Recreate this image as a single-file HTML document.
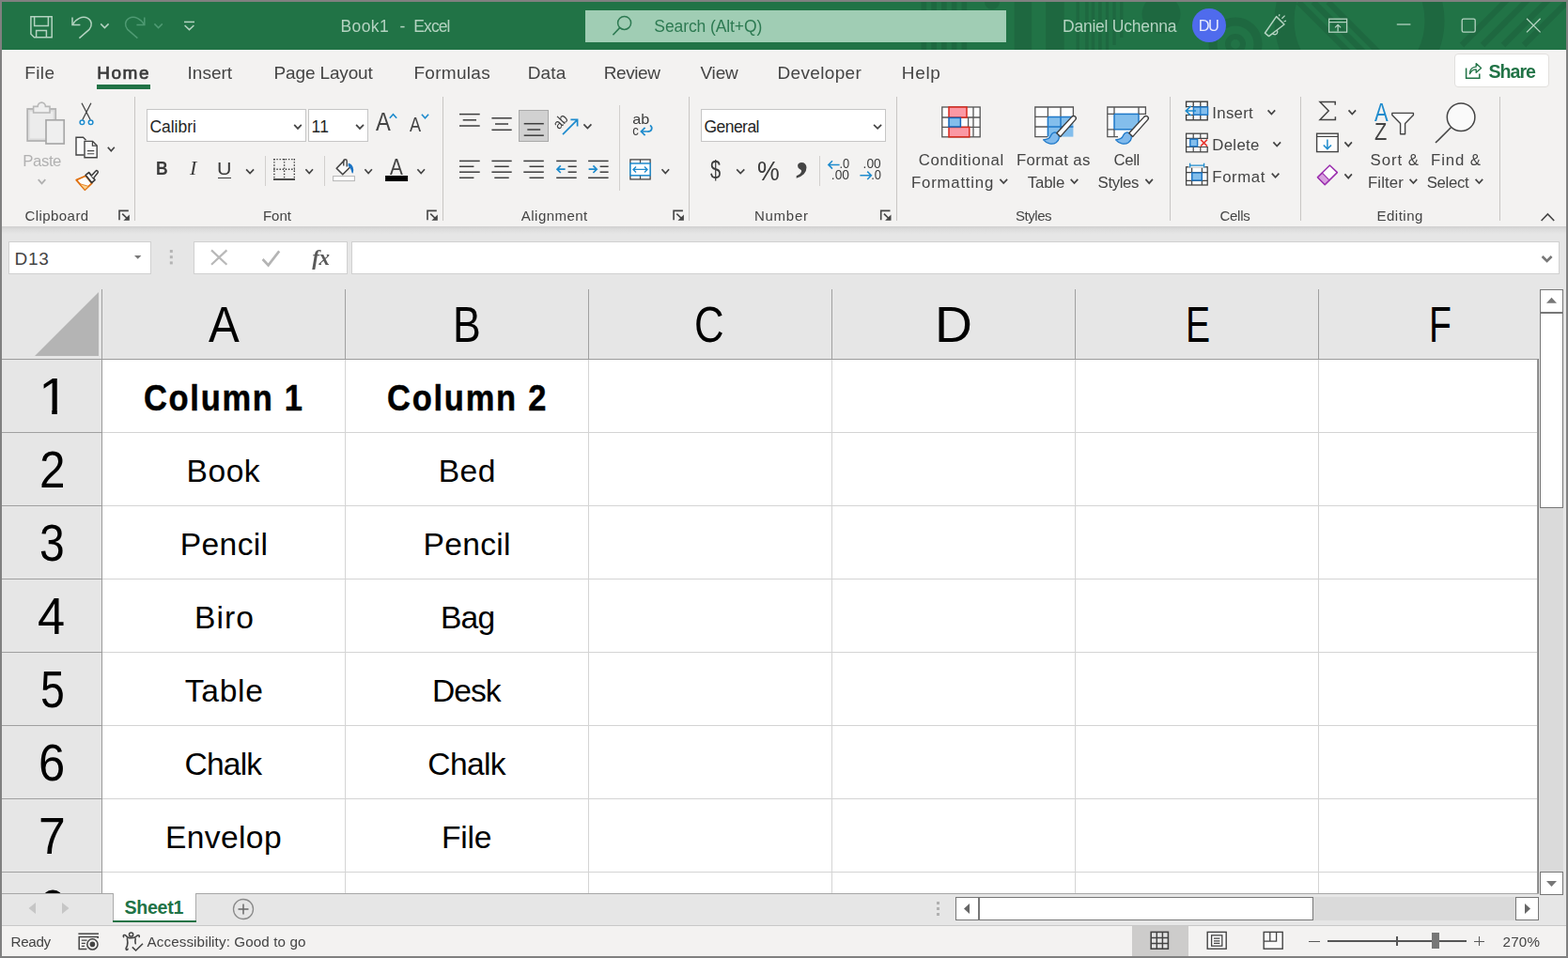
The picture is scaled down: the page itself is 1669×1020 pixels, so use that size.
<!DOCTYPE html>
<html lang="en"><head><meta charset="utf-8"><title>Book1 - Excel</title>
<style>
html,body{margin:0;padding:0;}
body{width:1669px;height:1020px;overflow:hidden;position:relative;background:#fff;font-family:"Liberation Sans",sans-serif;}
.b{position:absolute;box-sizing:border-box;display:block;}
.t{position:absolute;white-space:pre;line-height:1;font-family:"Liberation Sans",sans-serif;}
.gl{position:absolute;left:0;width:1669px;will-change:transform;pointer-events:none;}
svg{overflow:visible;}
</style></head>
<body>
<div id="window-frame" aria-label="Excel window">
<div class="b" style="left:0px;top:0px;width:1669px;height:1020px;background:#808080;"></div>
</div>
<header id="title-bar" aria-label="Title bar">
<div class="b" style="left:2px;top:2px;width:1665px;height:51px;background:#217346;"></div>
<svg class="b" style="left:2px;top:2px;overflow:hidden" width="1665" height="51" viewBox="2 2 1665 51"><g fill="#1e6840"><rect x="980.5" y="2" width="5.6" height="51"/><rect x="991.3" y="2" width="5.6" height="51"/><rect x="1002" y="2" width="5.6" height="51"/><rect x="1012.8" y="2" width="5.6" height="51"/><rect x="1023.6" y="2" width="5.6" height="51"/><circle cx="1056" cy="2" r="8"/><rect x="1079.7" y="2" width="18.4" height="51"/><rect x="1113.2" y="2" width="19.4" height="51"/><rect x="1145.5" y="2" width="3.4" height="51"/><rect x="1155.2" y="2" width="3.4" height="51"/><rect x="1161.7" y="2" width="3.4" height="51"/><rect x="1169.2" y="2" width="3.4" height="51"/><rect x="1176.8" y="2" width="3.4" height="51"/><rect x="1184.3" y="2" width="3.4" height="46"/><rect x="1192" y="2" width="3.4" height="38"/><circle cx="1236" cy="15" r="20.5"/></g><g fill="none" stroke="#1e6840"><circle cx="1315" cy="47" r="24" stroke-width="9"/><circle cx="1315" cy="47" r="8" stroke-width="6"/><circle cx="1447" cy="22" r="80" stroke-width="21"/></g><g stroke="#1e6840" stroke-width="6.2"><path d="M1382.0 2L1439.0 59"/><path d="M1397.8 2L1454.8 59"/><path d="M1413.6 2L1470.6 59"/><path d="M1556 48L1606 -2"/><path d="M1578 48L1628 -2"/><path d="M1600 48L1650 -2"/><path d="M1622 48L1672 -2"/></g></svg>
</header>
<div id="ribbon-background" aria-label="Ribbon background">
<div class="b" style="left:2px;top:53px;width:1665px;height:188px;background:#f3f2f1;"></div>
<div class="b" style="left:2px;top:241px;width:1665px;height:67px;background:#e6e6e6;"></div>
<div class="b" style="left:2px;top:241px;width:1665px;height:8px;background:linear-gradient(#cfcfcf,#dcdcdc 40%,#e6e6e6);"></div>
</div>
<div id="title-bar-content" aria-label="Title bar content">
<div class="b" style="left:623px;top:10.5px;width:448px;height:34px;background:#a0cdb4;"></div>
<div class="b" style="left:1269px;top:9px;width:36px;height:36px;background:#4f6bed;border-radius:50%;"></div>
<div class="gl" style="top:2px;height:51px">
<span class="t" style="left:362.50px;top:18.00px;font-size:17.5px;color:#b4d3c1;letter-spacing:0.403px;">Book1</span>
<span class="t" style="left:425.50px;top:18.00px;font-size:17.5px;color:#b4d3c1;">-</span>
<span class="t" style="left:440.30px;top:18.00px;font-size:17.5px;color:#b4d3c1;letter-spacing:-0.901px;">Excel</span>
<span class="t" style="left:696.30px;top:18.00px;font-size:17.5px;color:#2d7a52;letter-spacing:-0.092px;">Search (Alt+Q)</span>
<span class="t" style="left:1131.00px;top:18.00px;font-size:17.5px;color:#b4d3c1;letter-spacing:-0.238px;">Daniel Uchenna</span>
<span class="t" style="left:1275.80px;top:17.00px;font-size:16.4px;color:#e6eafc;letter-spacing:-1.637px;">DU</span>
</div>
</div>
<nav id="ribbon-tabs" aria-label="Ribbon tabs">
<div class="b" style="left:103px;top:90px;width:57px;height:5px;background:#217346;"></div>
<div class="b" style="left:1548px;top:57px;width:101px;height:36px;background:#ffffff;border:1px solid #e1dfdd;border-radius:4px;"></div>
<div class="gl" style="top:53px;height:47px">
<span class="t" style="left:26.20px;top:15.00px;font-size:19px;color:#444444;letter-spacing:0.384px;">File</span>
<span class="t" style="left:103.20px;top:15.00px;font-size:19px;color:#3b3b3b;letter-spacing:1.562px;-webkit-text-stroke:0.7px #3b3b3b;">Home</span>
<span class="t" style="left:199.60px;top:15.00px;font-size:19px;color:#444444;letter-spacing:-0.008px;">Insert</span>
<span class="t" style="left:291.60px;top:15.00px;font-size:19px;color:#444444;letter-spacing:-0.152px;">Page Layout</span>
<span class="t" style="left:440.40px;top:15.00px;font-size:19px;color:#444444;letter-spacing:0.303px;">Formulas</span>
<span class="t" style="left:561.70px;top:15.00px;font-size:19px;color:#444444;letter-spacing:0.144px;">Data</span>
<span class="t" style="left:642.70px;top:15.00px;font-size:19px;color:#444444;letter-spacing:-0.395px;">Review</span>
<span class="t" style="left:745.40px;top:15.00px;font-size:19px;color:#444444;letter-spacing:-0.139px;">View</span>
<span class="t" style="left:827.50px;top:15.00px;font-size:19px;color:#444444;letter-spacing:0.340px;">Developer</span>
<span class="t" style="left:959.80px;top:15.00px;font-size:19px;color:#444444;letter-spacing:0.664px;">Help</span>
<span class="t" style="left:1584.60px;top:14.00px;font-size:19.6px;color:#217346;letter-spacing:-1.040px;font-weight:700;">Share</span>
</div>
</nav>
<div id="title-bar-icons" aria-label="Quick access toolbar and window controls">
<svg class="b" style="left:0px;top:0px;" width="1669" height="100" viewBox="0 0 1669 100"><path d="M32.9 17.7H55.2V39.7H36.4L32.9 36.2Z" fill="none" stroke="#b4d3c1" stroke-width="1.5" stroke-linejoin="miter"/><path d="M36.6 17.7V27.4H51.4V17.7" fill="none" stroke="#b4d3c1" stroke-width="1.5"/><path d="M38.6 39.7V32.6H49.4V39.7" fill="none" stroke="#b4d3c1" stroke-width="1.5"/><path d="M77 18.4V26.6H85.4" fill="none" stroke="#b4d3c1" stroke-width="1.5"/><path d="M77.4 26.2C81 20 87.6 16.4 93.4 19.4C98 22 98.4 27.6 95 31.4L84.4 40.6" fill="none" stroke="#b4d3c1" stroke-width="1.5"/><polyline points="107.2,25.4 111.4,29.6 115.6,25.4" fill="none" stroke="#b4d3c1" stroke-width="1.5"/><path d="M153.8 18.4V26.6H145.4" fill="none" stroke="#4f9a73" stroke-width="1.5"/><path d="M153.4 26.2C149.8 20 143.2 16.4 137.4 19.4C132.8 22 132.4 27.6 135.8 31.4L146.4 40.6" fill="none" stroke="#4f9a73" stroke-width="1.5"/><polyline points="164.4,25.4 168.6,29.6 172.8,25.4" fill="none" stroke="#4f9a73" stroke-width="1.5"/><path d="M196 23.4H207" stroke="#b4d3c1" stroke-width="1.5"/><polyline points="196.6,27 201.5,31.6 206.4,27" fill="none" stroke="#b4d3c1" stroke-width="1.5"/><circle cx="664.6" cy="24.4" r="7" fill="none" stroke="#2d7a52" stroke-width="1.5"/><path d="M659.6 29.6L652.4 37.2" stroke="#2d7a52" stroke-width="1.6"/><path d="M1346.4 35.2L1358.6 17.6L1367 26L1350.6 38.6Z" fill="none" stroke="#b4d3c1" stroke-width="1.5" stroke-linejoin="round"/><path d="M1354.6 35.6a2.6 2.6 0 0 0 4.6 -3.4" fill="none" stroke="#b4d3c1" stroke-width="1.3"/><path d="M1361.4 17.2L1362 15.2M1364.4 19.8L1367.6 16.6M1366.6 22.8L1369 22.2" stroke="#b4d3c1" stroke-width="1.3"/><rect x="1414.6" y="20.2" width="19" height="14" fill="none" stroke="#b4d3c1" stroke-width="1.3"/><path d="M1414.6 23.6H1433.6" stroke="#b4d3c1" stroke-width="1.2"/><path d="M1424.1 33.4V26.6M1421 29.4L1424.1 26.4L1427.2 29.4" fill="none" stroke="#b4d3c1" stroke-width="1.3"/><path d="M1486.8 26H1501.4" stroke="#b4d3c1" stroke-width="1.3"/><rect x="1556.2" y="20.2" width="14" height="14" rx="1.6" fill="none" stroke="#b4d3c1" stroke-width="1.3"/><path d="M1625 19.8L1639.6 34.4M1639.6 19.8L1625 34.4" stroke="#b4d3c1" stroke-width="1.3"/><path d="M1560.6 72.6V83.2H1574.8V78.4" fill="none" stroke="#217346" stroke-width="1.5"/><path d="M1564.4 78.6C1564.6 74.2 1567.4 71.4 1571.2 71.2V67.6L1576.6 72.4L1571.2 77.2V73.8C1568.2 73.8 1566 75.4 1564.4 78.6Z" fill="none" stroke="#217346" stroke-width="1.3" stroke-linejoin="round"/></svg>
</div>
<section id="ribbon" aria-label="Home ribbon">
<div class="b" style="left:143.0px;top:103px;width:1px;height:132px;background:#c8c6c4;"></div>
<div class="b" style="left:156px;top:116px;width:170px;height:35px;background:#fff;border:1px solid #c6c6c6;"></div>
<div class="b" style="left:328px;top:116px;width:64px;height:35px;background:#fff;border:1px solid #c6c6c6;"></div>
<div class="b" style="left:232.4px;top:189px;width:13.8px;height:1.3px;background:#3b3b3b;"></div>
<div class="b" style="left:282.1px;top:166px;width:1px;height:32px;background:#d2d0ce;"></div>
<div class="b" style="left:345.0px;top:166px;width:1px;height:32px;background:#d2d0ce;"></div>
<div class="b" style="left:470.8px;top:103px;width:1px;height:132px;background:#c8c6c4;"></div>
<div class="b" style="left:552px;top:117px;width:32px;height:34px;background:#d1d1d1;border:1px solid #a9a9a9;"></div>
<div class="b" style="left:658.8px;top:112px;width:1px;height:91px;background:#d2d0ce;"></div>
<div class="b" style="left:733.0px;top:103px;width:1px;height:132px;background:#c8c6c4;"></div>
<div class="b" style="left:746px;top:116px;width:197px;height:35px;background:#fff;border:1px solid #c6c6c6;"></div>
<div class="b" style="left:871.8px;top:166px;width:1px;height:32px;background:#d2d0ce;"></div>
<div class="b" style="left:954.1px;top:103px;width:1px;height:132px;background:#c8c6c4;"></div>
<div class="b" style="left:1245.0px;top:103px;width:1px;height:132px;background:#c8c6c4;"></div>
<div class="b" style="left:1383.9px;top:103px;width:1px;height:132px;background:#c8c6c4;"></div>
<div class="b" style="left:1596.0px;top:103px;width:1px;height:132px;background:#c8c6c4;"></div>
<span class="t" style="left:159.40px;top:127.00px;font-size:17.5px;color:#262626;letter-spacing:-0.018px;">Calibri</span>
<span class="t" style="left:331.60px;top:127.00px;font-size:17.5px;color:#262626;letter-spacing:0.166px;">11</span>
<span class="t" style="left:749.40px;top:127.00px;font-size:17.5px;color:#262626;letter-spacing:-0.528px;">General</span>
<div class="gl" style="top:100px;height:141px">
<span class="t" style="left:24.30px;top:64.00px;font-size:16.8px;color:#b1b1b1;letter-spacing:-0.445px;">Paste</span>
<span class="t" style="left:26.60px;top:122.00px;font-size:15.0px;color:#444444;letter-spacing:0.417px;">Clipboard</span>
<span class="t" style="left:165.94px;top:69.00px;font-size:20.4px;color:#3b3b3b;transform:scaleX(0.8615);transform-origin:0 0;font-weight:700;">B</span>
<span class="t" style="left:202.38px;top:69.00px;font-size:20.5px;color:#3b3b3b;transform:scaleX(1.0778);transform-origin:0 0;font-style:italic;font-family:'Liberation Serif', serif;">I</span>
<span class="t" style="left:231.26px;top:71.00px;font-size:18.8px;color:#3b3b3b;transform:scaleX(1.1417);transform-origin:0 0;">U</span>
<span class="t" style="left:279.90px;top:122.00px;font-size:15.0px;color:#444444;letter-spacing:0.018px;">Font</span>
<span class="t" style="left:554.80px;top:122.00px;font-size:15.0px;color:#444444;letter-spacing:0.471px;">Alignment</span>
<span class="t" style="left:755.60px;top:67.00px;font-size:27.5px;color:#3b3b3b;transform:scaleX(0.7333);transform-origin:0 0;">$</span>
<span class="t" style="left:805.81px;top:67.00px;font-size:30px;color:#3b3b3b;transform:scaleX(0.8920);transform-origin:0 0;">%</span>
<span class="t" style="left:802.90px;top:122.00px;font-size:15.0px;color:#444444;letter-spacing:0.769px;">Number</span>
<span class="t" style="left:977.70px;top:63.00px;font-size:16.8px;color:#444444;letter-spacing:0.646px;">Conditional</span>
<span class="t" style="left:970.00px;top:87.00px;font-size:16.8px;color:#444444;letter-spacing:0.781px;">Formatting</span>
<span class="t" style="left:1082.00px;top:63.00px;font-size:16.8px;color:#444444;letter-spacing:0.357px;">Format as</span>
<span class="t" style="left:1093.80px;top:87.00px;font-size:16.8px;color:#444444;letter-spacing:-0.171px;">Table</span>
<span class="t" style="left:1185.40px;top:63.00px;font-size:16.8px;color:#444444;letter-spacing:-0.327px;">Cell</span>
<span class="t" style="left:1168.60px;top:87.00px;font-size:16.8px;color:#444444;letter-spacing:-0.361px;">Styles</span>
<span class="t" style="left:1080.90px;top:122.00px;font-size:15.0px;color:#444444;letter-spacing:-0.429px;">Styles</span>
<span class="t" style="left:1290.30px;top:13.00px;font-size:16.8px;color:#444444;letter-spacing:0.299px;">Insert</span>
<span class="t" style="left:1290.30px;top:47.00px;font-size:16.8px;color:#444444;letter-spacing:0.305px;">Delete</span>
<span class="t" style="left:1290.30px;top:81.00px;font-size:16.8px;color:#444444;letter-spacing:0.583px;">Format</span>
<span class="t" style="left:1298.50px;top:122.00px;font-size:15.0px;color:#444444;letter-spacing:-0.285px;">Cells</span>
<span class="t" style="left:1458.60px;top:63.00px;font-size:16.8px;color:#444444;letter-spacing:0.952px;">Sort &amp;</span>
<span class="t" style="left:1456.00px;top:87.00px;font-size:16.8px;color:#444444;letter-spacing:0.100px;">Filter</span>
<span class="t" style="left:1523.10px;top:63.00px;font-size:16.8px;color:#444444;letter-spacing:0.859px;">Find &amp;</span>
<span class="t" style="left:1518.70px;top:87.00px;font-size:16.8px;color:#444444;letter-spacing:-0.336px;">Select</span>
<span class="t" style="left:1465.50px;top:122.00px;font-size:15.0px;color:#444444;letter-spacing:0.496px;">Editing</span>
<span class="t" style="left:399.50px;top:16.00px;font-size:27.6px;color:#444444;transform:scaleX(0.8579);transform-origin:0 0;">A</span>
<span class="t" style="left:436.10px;top:22.00px;font-size:21.2px;color:#444444;transform:scaleX(0.8533);transform-origin:0 0;">A</span>
<span class="t" style="left:415.40px;top:66.00px;font-size:24px;color:#444444;transform:scaleX(0.8625);transform-origin:0 0;">A</span>
<span class="t" style="left:847.00px;top:35.00px;font-size:55px;color:#444444;transform:scaleX(0.9833);transform-origin:0 0;font-weight:700;font-family:'Liberation Serif', serif;">,</span>
<span class="t" style="left:1463.20px;top:7.00px;font-size:27px;color:#1e8bcd;transform:scaleX(0.8111);transform-origin:0 0;">A</span>
<span class="t" style="left:1463.40px;top:27.00px;font-size:26px;color:#444444;transform:scaleX(0.8375);transform-origin:0 0;">Z</span>
</div>
</section>
<div id="ribbon-icons" aria-label="Ribbon icons">
<svg class="b" style="left:0px;top:0px;" width="1669" height="250" viewBox="0 0 1669 250"><polyline points="40.7,191.2 44.5,195.4 48.3,191.2" fill="none" stroke="#b0b0b0" stroke-width="1.8"/><polyline points="114.8,156.7 118.3,160.7 121.8,156.7" fill="none" stroke="#444" stroke-width="1.7"/><g transform="translate(126.2,223.6)"><path d="M0.8 10.6V0.8H10.6" fill="none" stroke="#444" stroke-width="1.6"/><path d="M4 4L9.6 9.4" fill="none" stroke="#444" stroke-width="1.6"/><path d="M11.6 4.8V11.2H5.2Z" fill="#444"/></g><polyline points="313.2,132.8 317.0,136.9 320.8,132.8" fill="none" stroke="#444" stroke-width="1.7"/><polyline points="379.1,132.8 383.0,136.9 387.0,132.8" fill="none" stroke="#444" stroke-width="1.7"/><polyline points="262.1,180.3 266.1,184.5 270.1,180.3" fill="none" stroke="#444" stroke-width="1.7"/><polyline points="325.4,180.3 329.2,184.5 333.0,180.3" fill="none" stroke="#444" stroke-width="1.7"/><polyline points="388.4,180.3 392.1,184.5 395.9,180.3" fill="none" stroke="#444" stroke-width="1.7"/><polyline points="444.4,180.3 448.2,184.5 452.0,180.3" fill="none" stroke="#444" stroke-width="1.7"/><g transform="translate(454.2,223.6)"><path d="M0.8 10.6V0.8H10.6" fill="none" stroke="#444" stroke-width="1.6"/><path d="M4 4L9.6 9.4" fill="none" stroke="#444" stroke-width="1.6"/><path d="M11.6 4.8V11.2H5.2Z" fill="#444"/></g><polyline points="621.4,132.4 625.4,136.5 629.4,132.4" fill="none" stroke="#444" stroke-width="1.7"/><polyline points="704.5,180.3 708.3,184.5 712.1,180.3" fill="none" stroke="#444" stroke-width="1.7"/><g transform="translate(716.3,223.6)"><path d="M0.8 10.6V0.8H10.6" fill="none" stroke="#444" stroke-width="1.6"/><path d="M4 4L9.6 9.4" fill="none" stroke="#444" stroke-width="1.6"/><path d="M11.6 4.8V11.2H5.2Z" fill="#444"/></g><polyline points="930.1,132.8 934.1,136.9 938.1,132.8" fill="none" stroke="#444" stroke-width="1.7"/><polyline points="784.2,180.3 788.2,184.5 792.3,180.3" fill="none" stroke="#444" stroke-width="1.7"/><g transform="translate(936.9,223.6)"><path d="M0.8 10.6V0.8H10.6" fill="none" stroke="#444" stroke-width="1.6"/><path d="M4 4L9.6 9.4" fill="none" stroke="#444" stroke-width="1.6"/><path d="M11.6 4.8V11.2H5.2Z" fill="#444"/></g><polyline points="1064.4,190.9 1068.2,195.1 1072.1,190.9" fill="none" stroke="#444" stroke-width="1.7"/><polyline points="1139.7,190.9 1143.5,195.1 1147.3,190.9" fill="none" stroke="#444" stroke-width="1.7"/><polyline points="1219.4,190.9 1223.2,195.1 1226.9,190.9" fill="none" stroke="#444" stroke-width="1.7"/><polyline points="1349.6,117.4 1353.4,121.6 1357.2,117.4" fill="none" stroke="#444" stroke-width="1.7"/><polyline points="1355.4,151.4 1359.2,155.6 1363.1,151.4" fill="none" stroke="#444" stroke-width="1.7"/><polyline points="1353.8,184.6 1357.6,188.8 1361.4,184.6" fill="none" stroke="#444" stroke-width="1.7"/><polyline points="1435.5,117.4 1439.3,121.6 1443.1,117.4" fill="none" stroke="#444" stroke-width="1.7"/><polyline points="1431.4,151.4 1435.2,155.6 1438.9,151.4" fill="none" stroke="#444" stroke-width="1.7"/><polyline points="1431.4,185.4 1435.2,189.6 1438.9,185.4" fill="none" stroke="#444" stroke-width="1.7"/><polyline points="1500.6,190.9 1504.4,195.1 1508.2,190.9" fill="none" stroke="#444" stroke-width="1.7"/><polyline points="1570.6,190.9 1574.4,195.1 1578.2,190.9" fill="none" stroke="#444" stroke-width="1.7"/><polyline points="1640.6,235.0 1647.4,228.0 1654.2,235.0" fill="none" stroke="#444" stroke-width="1.6"/><rect x="29.2" y="116" width="30" height="34" fill="#ececec" stroke="#b2b2b2" stroke-width="1.8"/><rect x="31" y="117.8" width="26.4" height="30.4" fill="none" stroke="#dcdcdc" stroke-width="1.6"/><path d="M35.6 120V113.4H40.2a4.1 4.3 0 0 1 8.2 0H53V120Z" fill="#efefef" stroke="#b8b8b8" stroke-width="1.6"/><rect x="49" y="127.8" width="19.2" height="25.2" fill="#efefef" stroke="#a8a8a8" stroke-width="1.7"/><path d="M87 109.8L96.3 127.8M96.9 109.8L87.7 127.8" stroke="#444444" stroke-width="1.3" fill="none"/><circle cx="87.4" cy="130.2" r="2.3" fill="#fff" stroke="#1e8bcd" stroke-width="1.5"/><circle cx="96.6" cy="130.2" r="2.3" fill="#fff" stroke="#1e8bcd" stroke-width="1.5"/><path d="M89.5 165H81V146.2H88.5L91.5 149.2" fill="#fafafa" stroke="#444444" stroke-width="1.4"/><path d="M90 150.4H98.6L103.2 155V167.8H90Z" fill="#fafafa" stroke="#444444" stroke-width="1.4"/><path d="M98.4 150.6V155.2H103" fill="none" stroke="#444444" stroke-width="1.2"/><path d="M93 160.6H100.3M93 163.8H100.3" stroke="#444444" stroke-width="1.1"/><path d="M81.2 191.6L91.2 187.2L97.8 195.2L90.4 202.2Z" fill="#fdfdfd" stroke="#e0700f" stroke-width="1.8" stroke-linejoin="round"/><path d="M84.6 195.6L94.4 198.4L90.4 202Z" fill="#fbd491" stroke="#e0700f" stroke-width="0.8" stroke-linejoin="round"/><path d="M91.2 186.4L94.6 183.6L101 191.6L97.6 194.6Z" fill="#fafafa" stroke="#3b3b3b" stroke-width="1.7" stroke-linejoin="round"/><path d="M97.2 187.2L101.8 182.2a1.4 1.4 0 0 1 2.2 1.8L99.6 189.6" fill="#fafafa" stroke="#3b3b3b" stroke-width="1.5" stroke-linejoin="round"/><polyline points="414.8,125.8 418.5,121.6 422.2,125.8" fill="none" stroke="#1e8bcd" stroke-width="1.6"/><polyline points="448.9,121.8 452.5,125.8 456.1,121.8" fill="none" stroke="#1e8bcd" stroke-width="1.6"/><g fill="none" stroke="#3b3b3b" stroke-width="1.4" stroke-dasharray="1.4 1.75"><path d="M291.2 169.6H314"/><path d="M291.9 169V190"/><path d="M313.3 169V190"/><path d="M302.6 169V190"/><path d="M291.2 180.2H314"/></g><path d="M291 191H314" stroke="#222" stroke-width="1.6"/><path d="M366.8 170.4L358.2 179.2L364.8 185.8L373.4 177.2" fill="#fafafa" stroke="#444444" stroke-width="1.6" stroke-linejoin="round"/><path d="M365.8 176.6V171.4a1.7 1.7 0 0 1 3.4 0V177.6" fill="none" stroke="#444444" stroke-width="1.4"/><path d="M371.2 174.4C374.6 175.2 376.4 179.2 375.2 183.8C374.4 180.8 373.4 178.2 371.2 176.6Z" fill="#1a73c4" stroke="#1a73c4" stroke-width="1.2" stroke-linejoin="round"/><rect x="354.6" y="187.6" width="22.8" height="5" fill="#fff" stroke="#b4b4b4" stroke-width="1"/><rect x="410.1" y="187" width="24" height="6" fill="#000"/><path d="M489.0 121.6H510.7" stroke="#3d3d3d" stroke-width="1.5"/><path d="M492.7 127.8H507.0" stroke="#3d3d3d" stroke-width="1.5"/><path d="M489.0 134.0H510.7" stroke="#3d3d3d" stroke-width="1.5"/><path d="M523.4 125.8H544.7" stroke="#3d3d3d" stroke-width="1.5"/><path d="M527.0 132.0H541.0" stroke="#3d3d3d" stroke-width="1.5"/><path d="M523.4 138.3H544.7" stroke="#3d3d3d" stroke-width="1.5"/><path d="M557.7 131.7H578.8" stroke="#3d3d3d" stroke-width="1.5"/><path d="M561.3 138.0H575.2" stroke="#3d3d3d" stroke-width="1.5"/><path d="M557.7 144.2H578.8" stroke="#3d3d3d" stroke-width="1.5"/><path d="M599 143.2L614.2 127.8M607.4 127.4H614.6V134.6" fill="none" stroke="#1e8bcd" stroke-width="1.7"/><text x="0" y="0" font-family="Liberation Sans, sans-serif" font-size="15.6" fill="#3d3d3d" transform="translate(595,138.4) rotate(-47)" textLength="15.4" lengthAdjust="spacingAndGlyphs">ab</text><text x="673.2" y="132.4" font-family="Liberation Sans, sans-serif" font-size="14.6" fill="#3d3d3d" textLength="18" lengthAdjust="spacingAndGlyphs">ab</text><text x="673.2" y="143.6" font-family="Liberation Sans, sans-serif" font-size="14.6" fill="#3d3d3d" textLength="6.6" lengthAdjust="spacingAndGlyphs">c</text><path d="M692 133.4C695.4 136 693.6 140.4 689 140H682.6M686.6 135.8L682.4 140L686.6 144.2" fill="none" stroke="#1e8bcd" stroke-width="1.7"/><path d="M489.0 171.4H510.7" stroke="#3d3d3d" stroke-width="1.5"/><path d="M489.0 177.3H504.4" stroke="#3d3d3d" stroke-width="1.5"/><path d="M489.0 183.2H510.7" stroke="#3d3d3d" stroke-width="1.5"/><path d="M489.0 189.3H504.4" stroke="#3d3d3d" stroke-width="1.5"/><path d="M523.4 171.4H544.7" stroke="#3d3d3d" stroke-width="1.5"/><path d="M526.3 177.3H541.7" stroke="#3d3d3d" stroke-width="1.5"/><path d="M523.4 183.2H544.7" stroke="#3d3d3d" stroke-width="1.5"/><path d="M526.3 189.3H541.7" stroke="#3d3d3d" stroke-width="1.5"/><path d="M557.3 171.4H578.8" stroke="#3d3d3d" stroke-width="1.5"/><path d="M563.5 177.3H578.8" stroke="#3d3d3d" stroke-width="1.5"/><path d="M557.3 183.2H578.8" stroke="#3d3d3d" stroke-width="1.5"/><path d="M563.5 189.3H578.8" stroke="#3d3d3d" stroke-width="1.5"/><path d="M592.2 171.4H613.7" stroke="#3d3d3d" stroke-width="1.5"/><path d="M604.6 177.3H613.7" stroke="#3d3d3d" stroke-width="1.5"/><path d="M604.6 183.2H613.7" stroke="#3d3d3d" stroke-width="1.5"/><path d="M592.2 189.3H613.7" stroke="#3d3d3d" stroke-width="1.5"/><path d="M601.6 180.2H593.2M596.8 176.4L593 180.2L596.8 184" fill="none" stroke="#1e8bcd" stroke-width="1.7"/><path d="M626.1 171.4H647.6" stroke="#3d3d3d" stroke-width="1.5"/><path d="M638.6 177.3H647.6" stroke="#3d3d3d" stroke-width="1.5"/><path d="M638.6 183.2H647.6" stroke="#3d3d3d" stroke-width="1.5"/><path d="M626.1 189.3H647.6" stroke="#3d3d3d" stroke-width="1.5"/><path d="M626.6 180.2H635M631.4 176.4L635.2 180.2L631.4 184" fill="none" stroke="#1e8bcd" stroke-width="1.7"/><rect x="670.9" y="169.9" width="21.2" height="21" fill="#fafafa" stroke="#444444" stroke-width="1.3"/><path d="M681.5 170V174M681.5 187V191" stroke="#444444" stroke-width="1.2"/><rect x="670.9" y="174" width="21.2" height="12.8" fill="#fff" stroke="#1e8bcd" stroke-width="1.5"/><path d="M674 180.4H689M677 177.4L674 180.4L677 183.4M686 177.4L689 180.4L686 183.4" fill="none" stroke="#1e8bcd" stroke-width="1.4"/><text x="893.4" y="179.2" font-family="Liberation Sans, sans-serif" font-size="14.4" fill="#3d3d3d" textLength="10.8" lengthAdjust="spacingAndGlyphs">.0</text><text x="884.8" y="191.2" font-family="Liberation Sans, sans-serif" font-size="14.4" fill="#3d3d3d" textLength="19.2" lengthAdjust="spacingAndGlyphs">.00</text><path d="M893.6 175.4H881.8M886 171.2L881.8 175.4L886 179.6" fill="none" stroke="#1e8bcd" stroke-width="1.5"/><text x="918.6" y="179.2" font-family="Liberation Sans, sans-serif" font-size="14.4" fill="#3d3d3d" textLength="19.2" lengthAdjust="spacingAndGlyphs">.00</text><text x="927.2" y="191.2" font-family="Liberation Sans, sans-serif" font-size="14.4" fill="#3d3d3d" textLength="10.8" lengthAdjust="spacingAndGlyphs">.0</text><path d="M915.4 186.8H927.4M923.2 182.6L927.4 186.8L923.2 191" fill="none" stroke="#1e8bcd" stroke-width="1.5"/><rect x="1002.8" y="114" width="40.4" height="31.8" fill="#fdfdfd"/><g fill="none" stroke="#555555" stroke-width="1.3"><rect x="1002.8" y="114" width="40.4" height="31.8"/><path d="M1036 114V145.8M1002.8 125H1043.2M1002.8 135.4H1043.2M1030.6 125V135.4"/></g><rect x="1010" y="114" width="19" height="11" fill="#fb98a4" stroke="#d9291c" stroke-width="1.5"/><rect x="1010" y="135.4" width="21.8" height="10.4" fill="#fb98a4" stroke="#d9291c" stroke-width="1.5"/><rect x="1010" y="125.4" width="12.4" height="9.6" fill="#83beec" stroke="#1565b8" stroke-width="1.5"/><path d="M1101.8 114H1142.4V124.4H1115.4V145.6H1101.8Z" fill="#fdfdfd"/><rect x="1115.4" y="124.4" width="27" height="21.2" fill="#83beec"/><path d="M1142.4 124.4H1115.4V145.6M1129 124.4V145.6M1115.4 135H1142.4" fill="none" stroke="#1e78c8" stroke-width="1.5"/><g fill="none" stroke="#555555" stroke-width="1.3"><path d="M1142.4 124V114H1101.8V145.6H1115"/><path d="M1115.4 114V124M1129 114V124M1101.8 124.4H1115M1101.8 135H1115"/></g><g transform="translate(1110.2,115.4)"><path d="M0.4 33.4C5 33.2 7.4 31.6 8.4 28.8C9.6 25.4 13.4 24.6 15.8 27C18.2 29.6 17.4 34 14 36.4C9.8 39.2 4 37.6 0.4 33.4Z" fill="#7fb9ec" stroke="#1e78c8" stroke-width="1.3" stroke-linejoin="round"/><path d="M14.6 26.4L30.4 9.2C33 6.6 36.4 9.2 34.6 12L18.4 30.2Z" fill="#fdfdfd" stroke="#3d3d3d" stroke-width="1.4" stroke-linejoin="round"/></g><path d="M1178.8 114H1219.4V124L1200 145.6H1178.8Z" fill="#fdfdfd"/><rect x="1186" y="121.4" width="26" height="16.4" fill="#83beec" stroke="#1e78c8" stroke-width="1.5"/><g fill="none" stroke="#555555" stroke-width="1.3"><path d="M1219.4 122V114H1178.8V145.6H1190"/><path d="M1186 114V121M1212 114V121M1178.8 121.4H1186M1212 121.4H1219.4M1178.8 137.8H1186M1186 138V145.6"/></g><g transform="translate(1187.2,115.4)"><path d="M0.4 33.4C5 33.2 7.4 31.6 8.4 28.8C9.6 25.4 13.4 24.6 15.8 27C18.2 29.6 17.4 34 14 36.4C9.8 39.2 4 37.6 0.4 33.4Z" fill="#7fb9ec" stroke="#1e78c8" stroke-width="1.3" stroke-linejoin="round"/><path d="M14.6 26.4L30.4 9.2C33 6.6 36.4 9.2 34.6 12L18.4 30.2Z" fill="#fdfdfd" stroke="#3d3d3d" stroke-width="1.4" stroke-linejoin="round"/></g><rect x="1262.6" y="108.2" width="22.6" height="19.6" fill="#fdfdfd" stroke="#3d3d3d" stroke-width="1.4"/><path d="M1262.6 113.6H1285.2M1262.6 122.4H1285.2M1270.2 108.2V127.8M1277.8 108.2V127.8" stroke="#3d3d3d" stroke-width="1.3" fill="none"/><rect x="1261.6" y="114.4" width="9" height="7.4" fill="#f3f2f1"/><rect x="1270.4" y="114" width="15.2" height="8.2" fill="#83beec" stroke="#1e78c8" stroke-width="1.4"/><path d="M1277.8 114V122.2" stroke="#1e78c8" stroke-width="1.2"/><path d="M1273 118H1262.6M1267.6 112.8L1262.4 118L1267.6 123.2" fill="none" stroke="#1e8bcd" stroke-width="1.7"/><rect x="1262.6" y="142.2" width="22.6" height="19.6" fill="#fdfdfd" stroke="#444" stroke-width="1.3"/><path d="M1262.6 147.4H1285.2M1262.6 156.4H1285.2M1270.2 142.2V161.8M1277.8 142.2V161.8" stroke="#444" stroke-width="1.2" fill="none"/><rect x="1274.6" y="148" width="12" height="8" fill="#f3f2f1"/><rect x="1266.8" y="148.2" width="7.8" height="7.6" fill="#83beec" stroke="#1e78c8" stroke-width="1.4"/><path d="M1278 148.6L1285 155.6M1285 148.6L1278 155.6" stroke="#e8352e" stroke-width="1.5" fill="none"/><rect x="1262.6" y="177.8" width="22.6" height="19.2" fill="#fdfdfd" stroke="#444" stroke-width="1.3"/><path d="M1262.6 183.6H1285.2M1262.6 192.4H1285.2M1268.6 177.8V197M1279.4 177.8V197" stroke="#444" stroke-width="1.2" fill="none"/><rect x="1265.4" y="174.2" width="17" height="4.4" fill="#f3f2f1"/><rect x="1268.8" y="184" width="10.4" height="8" fill="#83beec" stroke="#1e78c8" stroke-width="1.4"/><path d="M1266.6 176.2H1281.6M1266.6 173.8V178.6M1281.6 173.8V178.6" stroke="#1e8bcd" stroke-width="1.3" fill="none"/><path d="M1421.2 111.8V108.4H1405L1414.2 118L1405 127.6H1421.4V124.2" fill="none" stroke="#444444" stroke-width="1.5" stroke-linejoin="miter"/><rect x="1401.6" y="142.2" width="22.6" height="19.4" fill="#fdfdfd" stroke="#444444" stroke-width="1.4"/><path d="M1401.6 145.4H1424.2" stroke="#444444" stroke-width="1.2"/><path d="M1412.9 148.4V158.4M1408.8 154.4L1412.9 158.6L1417 154.4" fill="none" stroke="#1e8bcd" stroke-width="1.5"/><path d="M1402.4 188.8L1415.4 176L1423.4 183.6L1410.2 196.6Z" fill="#fdfdfd" stroke="#9b2fae" stroke-width="1.5" stroke-linejoin="round"/><path d="M1402.6 188.8L1407.4 184.2L1415 191.8L1410.2 196.4Z" fill="#d9a1e0" stroke="#9b2fae" stroke-width="1.2" stroke-linejoin="round"/><path d="M1481.8 120.4H1504.4V122.6L1495.6 131.6V142.8H1490.6V131.6L1481.8 122.6Z" fill="#fdfdfd" stroke="#444444" stroke-width="1.4" stroke-linejoin="round"/><circle cx="1555.1" cy="124.7" r="14.8" fill="#fafafa" stroke="#444444" stroke-width="1.5"/><path d="M1544.4 135.8L1528 152" stroke="#444444" stroke-width="1.6"/></svg>
</div>
<div id="formula-bar" aria-label="Formula bar">
<div class="b" style="left:9px;top:257px;width:152px;height:35px;background:#fff;border:1px solid #d0d0d0;"></div>
<div class="b" style="left:206px;top:257px;width:164px;height:35px;background:#fff;border:1px solid #d0d0d0;"></div>
<div class="b" style="left:374px;top:257px;width:1286px;height:35px;background:#fff;border:1px solid #d0d0d0;"></div>
<span class="t" style="left:15.50px;top:266.00px;font-size:19px;color:#444;letter-spacing:0.756px;">D13</span>
</div>
<main id="worksheet" aria-label="Worksheet grid">
<div class="b" style="left:2px;top:308px;width:1665px;height:74px;background:#e6e6e6;"></div>
<div class="b" style="left:2px;top:382px;width:106px;height:569px;background:#e6e6e6;"></div>
<div class="b" style="left:108px;top:382px;width:1529px;height:569px;background:#fff;"></div>
<div class="b" style="left:367px;top:382px;width:1px;height:569px;background:#d4d4d4;"></div>
<div class="b" style="left:626px;top:382px;width:1px;height:569px;background:#d4d4d4;"></div>
<div class="b" style="left:885px;top:382px;width:1px;height:569px;background:#d4d4d4;"></div>
<div class="b" style="left:1144px;top:382px;width:1px;height:569px;background:#d4d4d4;"></div>
<div class="b" style="left:1403px;top:382px;width:1px;height:569px;background:#d4d4d4;"></div>
<div class="b" style="left:108px;top:460px;width:1529px;height:1px;background:#d4d4d4;"></div>
<div class="b" style="left:108px;top:538px;width:1529px;height:1px;background:#d4d4d4;"></div>
<div class="b" style="left:108px;top:616px;width:1529px;height:1px;background:#d4d4d4;"></div>
<div class="b" style="left:108px;top:694px;width:1529px;height:1px;background:#d4d4d4;"></div>
<div class="b" style="left:108px;top:772px;width:1529px;height:1px;background:#d4d4d4;"></div>
<div class="b" style="left:108px;top:850px;width:1529px;height:1px;background:#d4d4d4;"></div>
<div class="b" style="left:108px;top:928px;width:1529px;height:1px;background:#d4d4d4;"></div>
<div class="b" style="left:108px;top:308px;width:1px;height:74px;background:#a0a0a0;"></div>
<div class="b" style="left:367px;top:308px;width:1px;height:74px;background:#a0a0a0;"></div>
<div class="b" style="left:626px;top:308px;width:1px;height:74px;background:#a0a0a0;"></div>
<div class="b" style="left:885px;top:308px;width:1px;height:74px;background:#a0a0a0;"></div>
<div class="b" style="left:1144px;top:308px;width:1px;height:74px;background:#a0a0a0;"></div>
<div class="b" style="left:1403px;top:308px;width:1px;height:74px;background:#a0a0a0;"></div>
<div class="b" style="left:2px;top:460px;width:106px;height:1px;background:#a0a0a0;"></div>
<div class="b" style="left:2px;top:538px;width:106px;height:1px;background:#a0a0a0;"></div>
<div class="b" style="left:2px;top:616px;width:106px;height:1px;background:#a0a0a0;"></div>
<div class="b" style="left:2px;top:694px;width:106px;height:1px;background:#a0a0a0;"></div>
<div class="b" style="left:2px;top:772px;width:106px;height:1px;background:#a0a0a0;"></div>
<div class="b" style="left:2px;top:850px;width:106px;height:1px;background:#a0a0a0;"></div>
<div class="b" style="left:2px;top:928px;width:106px;height:1px;background:#a0a0a0;"></div>
<div class="b" style="left:108px;top:382px;width:1px;height:569px;background:#9b9b9b;"></div>
<div class="b" style="left:2px;top:382px;width:1635px;height:1px;background:#9b9b9b;"></div>
<div class="b" style="left:1636px;top:382px;width:1px;height:569px;background:#9a9a9a;"></div>
<svg class="b" style="left:37px;top:311px;" width="68" height="68" viewBox="0 0 68 68"><polygon points="68,0 68,68 0,68" fill="#b4b4b4"/></svg>
<div class="b" style="left:2px;top:929px;width:106px;height:22px;overflow:hidden;"><span class="t" style="left:41px;top:11px;font-size:55.4px;color:#000;transform:scaleX(0.86);transform-origin:0 0;">8</span></div>
<span class="t" style="left:221.50px;top:320.00px;font-size:52.8px;color:#000;transform:scaleX(0.9306);transform-origin:0 0;">A</span>
<span class="t" style="left:482.12px;top:320.00px;font-size:52.8px;color:#000;transform:scaleX(0.8448);transform-origin:0 0;">B</span>
<span class="t" style="left:739.34px;top:320.00px;font-size:52.8px;color:#000;transform:scaleX(0.8286);transform-origin:0 0;">C</span>
<span class="t" style="left:994.81px;top:320.00px;font-size:52.8px;color:#000;transform:scaleX(1.0469);transform-origin:0 0;">D</span>
<span class="t" style="left:1262.03px;top:320.00px;font-size:52.8px;color:#000;transform:scaleX(0.7414);transform-origin:0 0;">E</span>
<span class="t" style="left:1521.04px;top:320.00px;font-size:52.8px;color:#000;transform:scaleX(0.7407);transform-origin:0 0;">F</span>
<span class="t" style="left:41.20px;top:395.00px;font-size:55.4px;color:#000;transform:scaleX(1.0500);transform-origin:0 0;clip-path:polygon(0 0,30.8px 0,30.8px 41.0px,18.9px 41.0px,18.9px 55.4px,13.6px 55.4px,13.6px 41.0px,0 41.0px);">1</span>
<span class="t" style="left:41.51px;top:473.00px;font-size:55.4px;color:#000;transform:scaleX(0.8926);transform-origin:0 0;">2</span>
<span class="t" style="left:41.57px;top:551.00px;font-size:55.4px;color:#000;transform:scaleX(0.8667);transform-origin:0 0;">3</span>
<span class="t" style="left:40.06px;top:629.00px;font-size:55.4px;color:#000;transform:scaleX(0.9448);transform-origin:0 0;">4</span>
<span class="t" style="left:43.13px;top:707.00px;font-size:55.4px;color:#000;transform:scaleX(0.8370);transform-origin:0 0;">5</span>
<span class="t" style="left:41.47px;top:785.00px;font-size:55.4px;color:#000;transform:scaleX(0.9148);transform-origin:0 0;">6</span>
<span class="t" style="left:40.93px;top:863.00px;font-size:55.4px;color:#000;transform:scaleX(0.9333);transform-origin:0 0;">7</span>
<span class="t" style="left:153.12px;top:404.00px;font-size:39.4px;color:#000;transform:scaleX(0.8750);transform-origin:0 0;letter-spacing:1.951px;-webkit-text-stroke:0.5px #000;font-weight:700;">Column 1</span>
<span class="t" style="left:412.12px;top:404.00px;font-size:39.4px;color:#000;transform:scaleX(0.8750);transform-origin:0 0;letter-spacing:2.033px;-webkit-text-stroke:0.5px #000;font-weight:700;">Column 2</span>
<span class="t" style="left:198.60px;top:485.00px;font-size:33.6px;color:#000;letter-spacing:0.485px;">Book</span>
<span class="t" style="left:191.80px;top:563.00px;font-size:33.6px;color:#000;letter-spacing:0.361px;">Pencil</span>
<span class="t" style="left:206.90px;top:641.00px;font-size:33.6px;color:#000;letter-spacing:1.121px;">Biro</span>
<span class="t" style="left:196.80px;top:719.00px;font-size:33.6px;color:#000;letter-spacing:0.726px;">Table</span>
<span class="t" style="left:196.50px;top:797.00px;font-size:33.6px;color:#000;letter-spacing:-0.815px;">Chalk</span>
<span class="t" style="left:175.90px;top:875.00px;font-size:33.6px;color:#000;letter-spacing:0.388px;">Envelop</span>
<span class="t" style="left:466.80px;top:485.00px;font-size:33.6px;color:#000;letter-spacing:0.415px;">Bed</span>
<span class="t" style="left:450.50px;top:563.00px;font-size:33.6px;color:#000;letter-spacing:0.301px;">Pencil</span>
<span class="t" style="left:468.90px;top:641.00px;font-size:33.6px;color:#000;letter-spacing:-0.735px;">Bag</span>
<span class="t" style="left:460.00px;top:719.00px;font-size:33.6px;color:#000;letter-spacing:-0.971px;">Desk</span>
<span class="t" style="left:455.30px;top:797.00px;font-size:33.6px;color:#000;letter-spacing:-0.640px;">Chalk</span>
<span class="t" style="left:470.10px;top:875.00px;font-size:33.6px;color:#000;letter-spacing:-0.277px;">File</span>
</main>
<div id="sheet-tabs" aria-label="Sheet tabs">
<div class="b" style="left:2px;top:951px;width:1665px;height:35px;background:#e6e6e6;"></div>
<div class="b" style="left:2px;top:951px;width:1636px;height:1px;background:#a6a6a6;"></div>
<div class="b" style="left:120px;top:951px;width:89px;height:31px;background:#fff;border:1px solid #ababab;border-top:none;border-bottom:none;"></div>
<div class="b" style="left:120px;top:980px;width:89px;height:2px;background:#217346;"></div>
<svg class="b" style="left:30px;top:961px;" width="9" height="13" viewBox="0 0 9 13"><polygon points="8,0 8,12 0.5,6" fill="#c6c6c6"/></svg>
<svg class="b" style="left:65px;top:961px;" width="9" height="13" viewBox="0 0 9 13"><polygon points="1,0 1,12 8.5,6" fill="#c6c6c6"/></svg>
<svg class="b" style="left:247px;top:956px;" width="24" height="24" viewBox="0 0 24 24"><circle cx="12" cy="12" r="10.5" fill="none" stroke="#8a8a8a" stroke-width="1.3"/><path d="M6.5 12h11M12 6.5v11" stroke="#6a6a6a" stroke-width="1.5" fill="none"/></svg>
<div class="b" style="left:997px;top:960px;width:3px;height:3px;background:#b0b0b0;"></div>
<div class="b" style="left:997px;top:966px;width:3px;height:3px;background:#b0b0b0;"></div>
<div class="b" style="left:997px;top:972px;width:3px;height:3px;background:#b0b0b0;"></div>
<div class="b" style="left:1017px;top:955px;width:621px;height:25px;background:#dadada;"></div>
<div class="b" style="left:1017px;top:955px;width:25px;height:25px;background:#fff;border:1px solid #777;"></div>
<div class="b" style="left:1042px;top:955px;width:356px;height:25px;background:#fff;border:1px solid #777;"></div>
<div class="b" style="left:1613px;top:955px;width:25px;height:25px;background:#fff;border:1px solid #777;"></div>
<svg class="b" style="left:1017px;top:955px;" width="25" height="25" viewBox="0 0 25 25"><polygon points="15,7 15,18 9,12.5" fill="#666"/></svg>
<svg class="b" style="left:1613px;top:955px;" width="25" height="25" viewBox="0 0 25 25"><polygon points="10,7 10,18 16,12.5" fill="#666"/></svg>
<span class="t" style="left:132.50px;top:957.00px;font-size:19.6px;color:#217346;letter-spacing:-0.271px;font-weight:700;">Sheet1</span>
</div>
<div id="vertical-scrollbar" aria-label="Vertical scrollbar">
<div class="b" style="left:1638px;top:308px;width:29px;height:643px;background:#e6e6e6;"></div>
<div class="b" style="left:1639px;top:333px;width:25px;height:596px;background:#dadada;"></div>
<div class="b" style="left:1639px;top:308px;width:25px;height:25px;background:#fff;border:1px solid #777;"></div>
<div class="b" style="left:1639px;top:333px;width:25px;height:208px;background:#fff;border:1px solid #777;"></div>
<div class="b" style="left:1639px;top:928px;width:25px;height:25px;background:#fff;border:1px solid #777;"></div>
<svg class="b" style="left:1639px;top:308px;" width="25" height="25" viewBox="0 0 25 25"><polygon points="7,14.8 18,14.8 12.5,8.8" fill="#777"/></svg>
<svg class="b" style="left:1639px;top:928px;" width="25" height="24" viewBox="0 0 25 24"><polygon points="7,10 18,10 12.5,16" fill="#777"/></svg>
</div>
<footer id="status-bar" aria-label="Status bar">
<div class="b" style="left:2px;top:986px;width:1665px;height:32px;background:#f3f2f1;"></div>
<div class="b" style="left:2px;top:985px;width:1665px;height:1px;background:#c8c8c8;"></div>
<div class="b" style="left:1205px;top:986px;width:60px;height:32px;background:#cdcccb;"></div>
<div class="b" style="left:1393px;top:1001.5px;width:12px;height:1.1px;background:#5a5a5a;"></div>
<div class="b" style="left:1413px;top:1001px;width:148px;height:2px;background:#555;"></div>
<div class="b" style="left:1486px;top:997px;width:2px;height:10px;background:#555;"></div>
<div class="b" style="left:1524px;top:993px;width:8px;height:17px;background:#777;"></div>
<div class="b" style="left:1569px;top:1001.5px;width:11.4px;height:1.1px;background:#5a5a5a;"></div>
<div class="b" style="left:1574.2px;top:997px;width:1.1px;height:10.4px;background:#5a5a5a;"></div>
<div class="gl" style="top:986px;height:32px">
<span class="t" style="left:11.60px;top:9.00px;font-size:15.2px;color:#444;letter-spacing:-0.327px;">Ready</span>
<span class="t" style="left:156.50px;top:9.00px;font-size:15.2px;color:#444;letter-spacing:0.110px;">Accessibility: Good to go</span>
<span class="t" style="left:1599.50px;top:9.00px;font-size:15.2px;color:#444;letter-spacing:0.220px;">270%</span>
</div>
</footer>
<div id="overlay-icons" aria-label="Formula bar and status bar icons">
<svg class="b" style="left:0px;top:0px;pointer-events:none;" width="1669" height="1020" viewBox="0 0 1669 1020"><path d="M225 266.4L241.4 281.8M241.4 266.4L225 281.8" stroke="#b8b8b8" stroke-width="2.2" fill="none"/><path d="M279.6 276L285.6 282.4L297.2 267.4" stroke="#b4b4b4" stroke-width="2.6" fill="none"/><path d="M143 272H150.4L146.7 275.8Z" fill="#777"/><rect x="180.8" y="266" width="3" height="3" fill="#b4b4b4"/><rect x="180.8" y="272.2" width="3" height="3" fill="#b4b4b4"/><rect x="180.8" y="278.4" width="3" height="3" fill="#b4b4b4"/><path d="M1641.6 273L1646.6 278L1651.6 273" stroke="#777" stroke-width="2.6" fill="none"/><path d="M83.4 994.2H105" stroke="#444" stroke-width="1.5"/><path d="M92.4 1010.4H84.2V997.6H104.2V999" fill="none" stroke="#444" stroke-width="1.5"/><path d="M86.8 1001.2H92.6M86.8 1004.4H90.8M86.8 1007.4H90" stroke="#444" stroke-width="1.3"/><circle cx="98.4" cy="1005.4" r="5.6" fill="#f3f2f1" stroke="#444" stroke-width="1.5"/><circle cx="98.4" cy="1005.4" r="2.8" fill="#444"/><circle cx="139.6" cy="995" r="2.1" fill="none" stroke="#444" stroke-width="1.5"/><path d="M131.6 997.6C130.4 995.6 133 994.6 134.4 996.6C135.4 998.2 136.6 998.8 139.6 998.8C142.6 998.8 144.2 998.2 145.4 996.8C146.6 995.2 148.8 995.6 148.2 997.4" fill="none" stroke="#444" stroke-width="1.6" stroke-linecap="round"/><path d="M135.4 999.4C136 1002.4 136 1005 135.4 1007C135 1008.6 133.4 1009.4 134.2 1010.8C134.8 1011.8 136 1011.4 136 1010.4M144.2 999.4C143.8 1001.2 143.8 1003 144.2 1004.6" fill="none" stroke="#444" stroke-width="1.6" stroke-linecap="round"/><path d="M140.8 1008.4L144.6 1012L152 1004.8" fill="none" stroke="#444" stroke-width="1.6"/><rect x="1225.2" y="992.4" width="18.2" height="17.8" fill="#e4e4e4" stroke="#444" stroke-width="1.6"/><path d="M1231.3 992.4V1010.2M1237.4 992.4V1010.2M1225.2 998.4H1243.4M1225.2 1004.4H1243.4" stroke="#444" stroke-width="1.5" fill="none"/><rect x="1285.2" y="992.4" width="20" height="17.8" fill="#fafafa" stroke="#444" stroke-width="1.4"/><rect x="1289.6" y="995.8" width="11.2" height="11.4" fill="none" stroke="#444" stroke-width="1.3"/><path d="M1292 999.2H1298.4M1292 1001.8H1298.4M1292 1004.4H1298.4" stroke="#444" stroke-width="1.3"/><rect x="1345.2" y="992.4" width="20" height="17.8" fill="#fafafa" stroke="#444" stroke-width="1.4"/><path d="M1345.2 1002.2H1358.6V992.4M1351.8 992.4V1002.2" fill="none" stroke="#444" stroke-width="1.3"/></svg>
<span class="t" style="left:332.20px;top:263.00px;font-size:23px;color:#595959;letter-spacing:-0.259px;font-weight:700;font-style:italic;font-family:'Liberation Serif', serif;">fx</span>
</div>
</body></html>
